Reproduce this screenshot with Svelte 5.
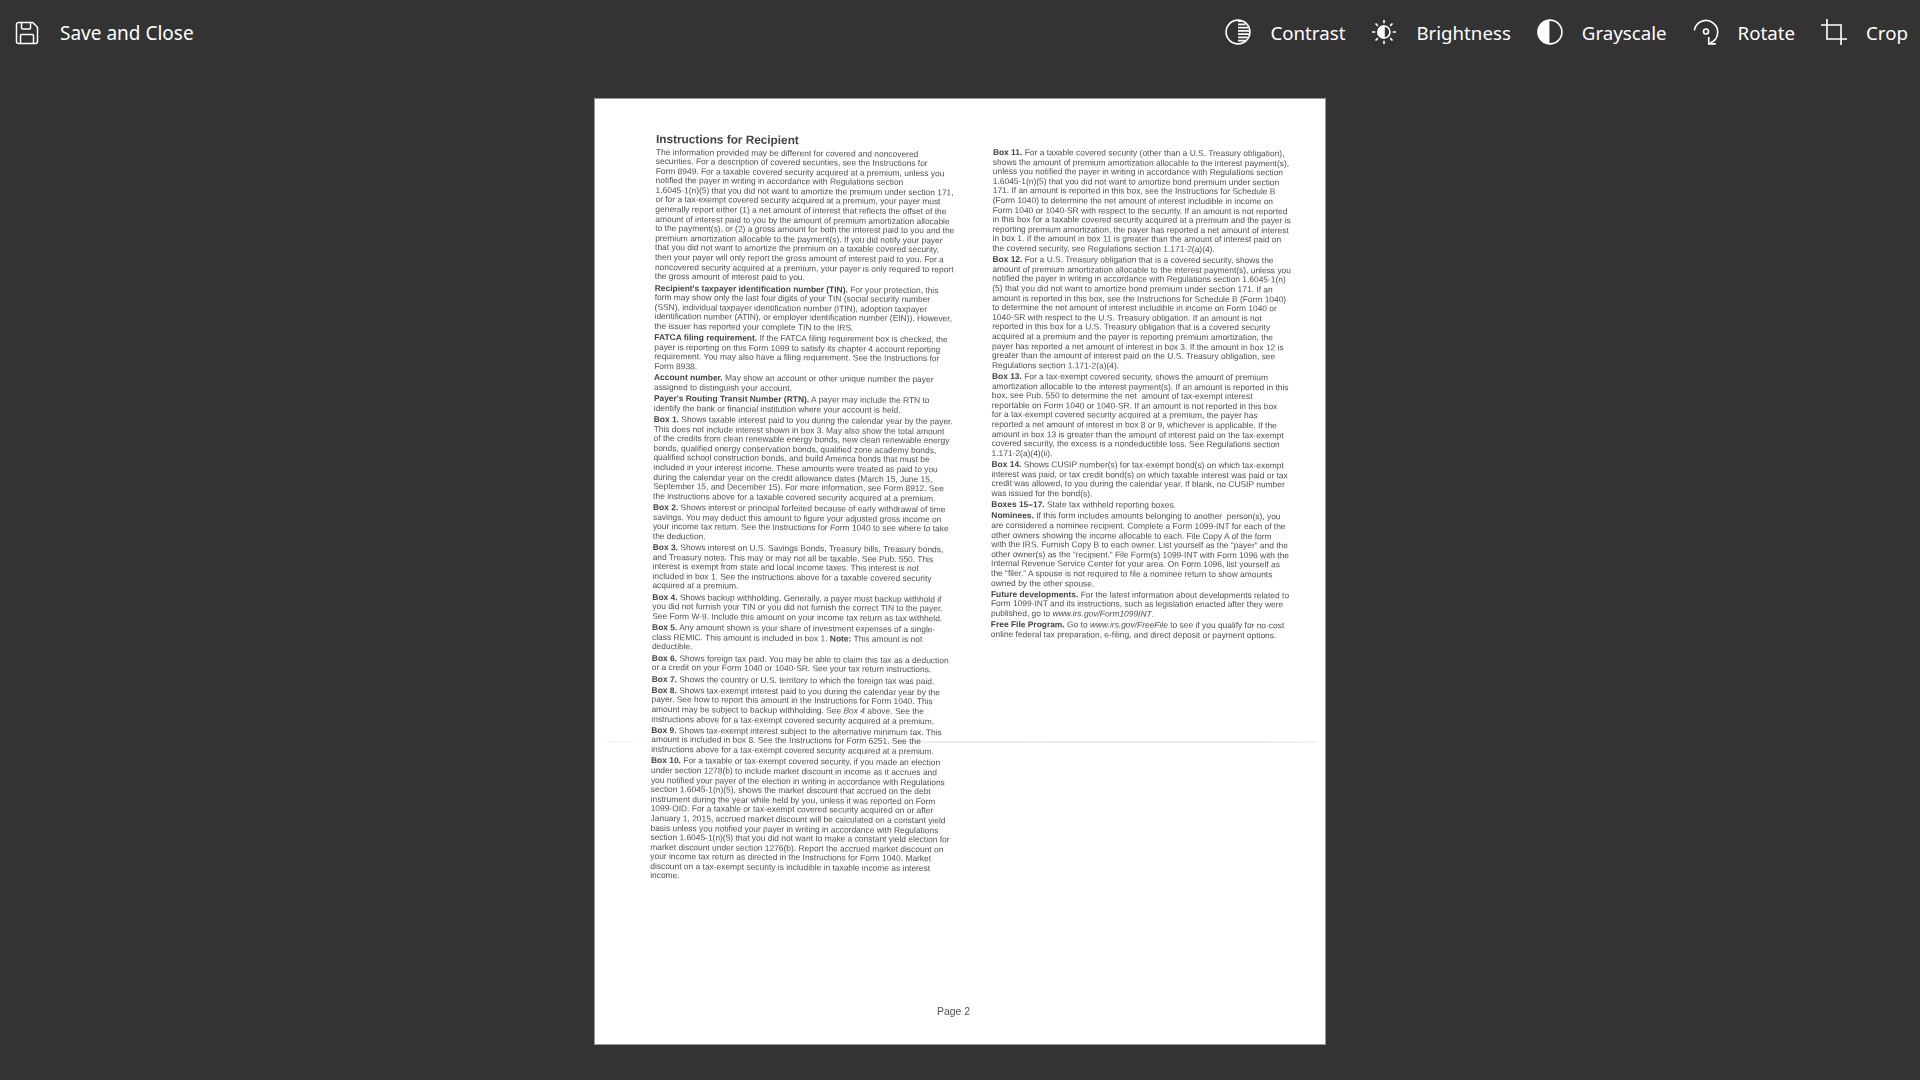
<script>
	const tools = [
		{ label: 'Contrast', icon: 'contrast' },
		{ label: 'Brightness', icon: 'brightness' },
		{ label: 'Grayscale', icon: 'grayscale' },
		{ label: 'Rotate', icon: 'rotate' },
		{ label: 'Crop', icon: 'crop' }
	];
</script>

{#snippet icon(name)}
	<svg class="icon" viewBox="0 0 24 24" fill="none" stroke="#fff" stroke-width="1.5">
		{#if name === 'save'}
			<path d="M3.5 1.5h14.2l4.8 4.8v14.2a2 2 0 0 1-2 2h-17a2 2 0 0 1-2-2v-17a2 2 0 0 1 2-2z" />
			<path d="M6.5 1.5v5.5a1 1 0 0 0 1 1h7a1 1 0 0 0 1-1v-5.5" />
			<path d="M5.5 22.5v-8a1 1 0 0 1 1-1h11a1 1 0 0 1 1 1v8" />
		{:else if name === 'contrast'}
			<circle cx="12" cy="12" r="11" />
			<path d="M12 2h3.5M12 5h7M12 8h9.5M12 11h10.5M12 14h10.5M12 17h9M12 20h6.5" stroke-width="1.6" />
		{:else if name === 'brightness'}
			<circle cx="12" cy="12" r="5.5" />
			<path d="M12 6.5a5.5 5.5 0 0 0 0 11z" fill="#fff" />
			<path d="M12 1v3M12 20v3M1 12h3M20 12h3M4.2 4.2l2.1 2.1M17.7 17.7l2.1 2.1M4.2 19.8l2.1-2.1M17.7 6.3l2.1-2.1" />
		{:else if name === 'grayscale'}
			<circle cx="12" cy="12" r="11" />
			<path d="M11.500 1a11 11 0 0 0 0 22z" fill="#fff" stroke="none" />
		{:else if name === 'rotate'}
			<path d="M1.300 10.500a10.800 10.800 0 1 1 14.700 11.700" />
			<path d="M14.500 16.500v6.500h6.500" />
			<circle cx="12" cy="11.500" r="2.300" />
		{:else if name === 'crop'}
			<path d="M5.500 0v18.500h18.500M0 5.500h18.500v18.500" />
		{/if}
	</svg>
{/snippet}

<div class="app">
	<header class="toolbar">
		<button class="tool save">
			{@render icon('save')}
			<span>Save and Close</span>
		</button>
		<div class="tools">
			{#each tools as t}
				<button class="tool">
					{@render icon(t.icon)}
					<span>{t.label}</span>
				</button>
			{/each}
		</div>
	</header>

	<main class="stage">
		<article class="page">
			<div class="columns">
				<section class="col left">
					<h1>Instructions for Recipient</h1>
					<p>The information provided may be different for covered and noncovered<br />
					securities. For a description of covered securities, see the Instructions for<br />
					Form 8949. For a taxable covered security acquired at a premium, unless you<br />
					notified the payer in writing in accordance with Regulations section<br />
					1.6045-1(n)(5) that you did not want to amortize the premium under section 171,<br />
					or for a tax-exempt covered security acquired at a premium, your payer must<br />
					generally report either (1) a net amount of interest that reflects the offset of the<br />
					amount of interest paid to you by the amount of premium amortization allocable<br />
					to the payment(s), or (2) a gross amount for both the interest paid to you and the<br />
					premium amortization allocable to the payment(s). If you did notify your payer<br />
					that you did not want to amortize the premium on a taxable covered security,<br />
					then your payer will only report the gross amount of interest paid to you. For a<br />
					noncovered security acquired at a premium, your payer is only required to report<br />
					the gross amount of interest paid to you.</p>
					<p><b>Recipient's taxpayer identification number (TIN).</b> For your protection, this<br />
					form may show only the last four digits of your TIN (social security number<br />
					(SSN), individual taxpayer identification number (ITIN), adoption taxpayer<br />
					identification number (ATIN), or employer identification number (EIN)). However,<br />
					the issuer has reported your complete TIN to the IRS.</p>
					<p><b>FATCA filing requirement.</b> If the FATCA filing requirement box is checked, the<br />
					payer is reporting on this Form 1099 to satisfy its chapter 4 account reporting<br />
					requirement. You may also have a filing requirement. See the Instructions for<br />
					Form 8938.</p>
					<p><b>Account number.</b> May show an account or other unique number the payer<br />
					assigned to distinguish your account.</p>
					<p><b>Payer's Routing Transit Number (RTN).</b> A payer may include the RTN to<br />
					identify the bank or financial institution where your account is held.</p>
					<p><b>Box 1.</b> Shows taxable interest paid to you during the calendar year by the payer.<br />
					This does not include interest shown in box 3. May also show the total amount<br />
					of the credits from clean renewable energy bonds, new clean renewable energy<br />
					bonds, qualified energy conservation bonds, qualified zone academy bonds,<br />
					qualified school construction bonds, and build America bonds that must be<br />
					included in your interest income. These amounts were treated as paid to you<br />
					during the calendar year on the credit allowance dates (March 15, June 15,<br />
					September 15, and December 15). For more information, see Form 8912. See<br />
					the instructions above for a taxable covered security acquired at a premium.</p>
					<p><b>Box 2.</b> Shows interest or principal forfeited because of early withdrawal of time<br />
					savings. You may deduct this amount to figure your adjusted gross income on<br />
					your income tax return. See the Instructions for Form 1040 to see where to take<br />
					the deduction.</p>
					<p><b>Box 3.</b> Shows interest on U.S. Savings Bonds, Treasury bills, Treasury bonds,<br />
					and Treasury notes. This may or may not all be taxable. See Pub. 550. This<br />
					interest is exempt from state and local income taxes. This interest is not<br />
					included in box 1. See the instructions above for a taxable covered security<br />
					acquired at a premium.</p>
					<p><b>Box 4.</b> Shows backup withholding. Generally, a payer must backup withhold if<br />
					you did not furnish your TIN or you did not furnish the correct TIN to the payer.<br />
					See Form W-9. Include this amount on your income tax return as tax withheld.</p>
					<p><b>Box 5.</b> Any amount shown is your share of investment expenses of a single-<br />
					class REMIC. This amount is included in box 1. <b>Note:</b> This amount is not<br />
					deductible.</p>
					<p><b>Box 6.</b> Shows foreign tax paid. You may be able to claim this tax as a deduction<br />
					or a credit on your Form 1040 or 1040-SR. See your tax return instructions.</p>
					<p><b>Box 7.</b> Shows the country or U.S. territory to which the foreign tax was paid.</p>
					<p><b>Box 8.</b> Shows tax-exempt interest paid to you during the calendar year by the<br />
					payer. See how to report this amount in the Instructions for Form 1040. This<br />
					amount may be subject to backup withholding. See <i>Box 4</i> above. See the<br />
					instructions above for a tax-exempt covered security acquired at a premium.</p>
					<p><b>Box 9.</b> Shows tax-exempt interest subject to the alternative minimum tax. This<br />
					amount is included in box 8. See the Instructions for Form 6251. See the<br />
					instructions above for a tax-exempt covered security acquired at a premium.</p>
					<p><b>Box 10.</b> For a taxable or tax-exempt covered security, if you made an election<br />
					under section 1278(b) to include market discount in income as it accrues and<br />
					you notified your payer of the election in writing in accordance with Regulations<br />
					section 1.6045-1(n)(5), shows the market discount that accrued on the debt<br />
					instrument during the year while held by you, unless it was reported on Form<br />
					1099-OID. For a taxable or tax-exempt covered security acquired on or after<br />
					January 1, 2015, accrued market discount will be calculated on a constant yield<br />
					basis unless you notified your payer in writing in accordance with Regulations<br />
					section 1.6045-1(n)(5) that you did not want to make a constant yield election for<br />
					market discount under section 1276(b). Report the accrued market discount on<br />
					your income tax return as directed in the Instructions for Form 1040. Market<br />
					discount on a tax-exempt security is includible in taxable income as interest<br />
					income.</p>
				</section>

				<section class="col right">
					<p><b>Box 11.</b> For a taxable covered security (other than a U.S. Treasury obligation),<br />
					shows the amount of premium amortization allocable to the interest payment(s),<br />
					unless you notified the payer in writing in accordance with Regulations section<br />
					1.6045-1(n)(5) that you did not want to amortize bond premium under section<br />
					171. If an amount is reported in this box, see the Instructions for Schedule B<br />
					(Form 1040) to determine the net amount of interest includible in income on<br />
					Form 1040 or 1040-SR with respect to the security. If an amount is not reported<br />
					in this box for a taxable covered security acquired at a premium and the payer is<br />
					reporting premium amortization, the payer has reported a net amount of interest<br />
					in box 1. If the amount in box 11 is greater than the amount of interest paid on<br />
					the covered security, see Regulations section 1.171-2(a)(4).</p>
					<p><b>Box 12.</b> For a U.S. Treasury obligation that is a covered security, shows the<br />
					amount of premium amortization allocable to the interest payment(s), unless you<br />
					notified the payer in writing in accordance with Regulations section 1.6045-1(n)<br />
					(5) that you did not want to amortize bond premium under section 171. If an<br />
					amount is reported in this box, see the Instructions for Schedule B (Form 1040)<br />
					to determine the net amount of interest includible in income on Form 1040 or<br />
					1040-SR with respect to the U.S. Treasury obligation. If an amount is not<br />
					reported in this box for a U.S. Treasury obligation that is a covered security<br />
					acquired at a premium and the payer is reporting premium amortization, the<br />
					payer has reported a net amount of interest in box 3. If the amount in box 12 is<br />
					greater than the amount of interest paid on the U.S. Treasury obligation, see<br />
					Regulations section 1.171-2(a)(4).</p>
					<p><b>Box 13.</b> For a tax-exempt covered security, shows the amount of premium<br />
					amortization allocable to the interest payment(s). If an amount is reported in this<br />
					box, see Pub. 550 to determine the net &nbsp;amount of tax-exempt interest<br />
					reportable on Form 1040 or 1040-SR. If an amount is not reported in this box<br />
					for a tax-exempt covered security acquired at a premium, the payer has<br />
					reported a net amount of interest in box 8 or 9, whichever is applicable. If the<br />
					amount in box 13 is greater than the amount of interest paid on the tax-exempt<br />
					covered security, the excess is a nondeductible loss. See Regulations section<br />
					1.171-2(a)(4)(ii).</p>
					<p><b>Box 14.</b> Shows CUSIP number(s) for tax-exempt bond(s) on which tax-exempt<br />
					interest was paid, or tax credit bond(s) on which taxable interest was paid or tax<br />
					credit was allowed, to you during the calendar year. If blank, no CUSIP number<br />
					was issued for the bond(s).</p>
					<p><b>Boxes 15–17.</b> State tax withheld reporting boxes.</p>
					<p><b>Nominees.</b> If this form includes amounts belonging to another &nbsp;person(s), you<br />
					are considered a nominee recipient. Complete a Form 1099-INT for each of the<br />
					other owners showing the income allocable to each. File Copy A of the form<br />
					with the IRS. Furnish Copy B to each owner. List yourself as the “payer” and the<br />
					other owner(s) as the “recipient.” File Form(s) 1099-INT with Form 1096 with the<br />
					Internal Revenue Service Center for your area. On Form 1096, list yourself as<br />
					the “filer.” A spouse is not required to file a nominee return to show amounts<br />
					owned by the other spouse.</p>
					<p><b>Future developments.</b> For the latest information about developments related to<br />
					Form 1099-INT and its instructions, such as legislation enacted after they were<br />
					published, go to <i>www.irs.gov/Form1099INT</i>.</p>
					<p><b>Free File Program.</b> Go to <i>www.irs.gov/FreeFile</i> to see if you qualify for no-cost<br />
					online federal tax preparation, e-filing, and direct deposit or payment options.</p>
				</section>
			</div>
			<div class="crease"></div>
			<div class="pageno">Page 2</div>
		</article>
	</main>
</div>

<style>
	:global(body) {
		margin: 0;
		background: #333;
	}
	.app {
		height: 1080px;
		display: flex;
		flex-direction: column;
		background: #333;
		overflow: hidden;
	}
	.toolbar {
		height: 66px;
		display: flex;
		justify-content: space-between;
		align-items: center;
		padding: 0 12px 0 15px;
	}
	.tools {
		display: flex;
		gap: 26px;
		margin-bottom: 2px;
	}
	.tool {
		display: flex;
		align-items: center;
		gap: 19px;
		padding: 0;
		background: none;
		border: 0;
		color: #fff;
		font-family: 'Noto Sans', 'Open Sans', sans-serif;
		font-size: 18.7px;
	}
	.tool.save {
		gap: 21px;
		font-size: 19px;
	}
	.icon {
		width: 26px;
		height: 26px;
		flex: none;
	}
	.save .icon {
		width: 24px;
		height: 24px;
	}
	.stage {
		display: flex;
		justify-content: center;
		padding-top: 32px;
	}
	.page {
		position: relative;
		box-sizing: border-box;
		width: 732px;
		height: 947px;
		padding: 33px 0 0 61px;
		background: #fff;
		border: 1px solid #999;
		display: flex;
		flex-direction: column;
		font-family: 'Liberation Sans', Arial, sans-serif;
		color: #505050;
		filter: blur(0.4px);
	}
	.columns {
		display: grid;
		grid-template-columns: 337px 1fr;
	}
	.col {
		font-size: 8.42px;
		line-height: 9.6px;
		white-space: nowrap;
	}
	.left {
		transform: rotate(0.45deg);
		transform-origin: 0 0;
	}
	.right {
		padding-top: 16px;
		transform: rotate(0.25deg);
		transform-origin: 0 0;
	}
	h1 {
		margin: 0 0 1.5px;
		font-size: 11.8px;
		line-height: 14px;
		color: #444;
	}
	p {
		margin: 0 0 1.7px;
	}
	b {
		color: #444;
	}
	.crease {
		position: absolute;
		left: 12px;
		right: 8px;
		top: 642px;
		height: 2px;
		mix-blend-mode: multiply;
		background: linear-gradient(90deg, #f4f4f4, #fff 6%, #fff 35%, #e6e6e6 50%, #eee 60%, #e6e6e6 80%, #f2f2f2);
	}
	.pageno {
		margin-top: auto;
		margin-bottom: 27px;
		padding-left: 281px;
		font-size: 10.4px;
	}
</style>
